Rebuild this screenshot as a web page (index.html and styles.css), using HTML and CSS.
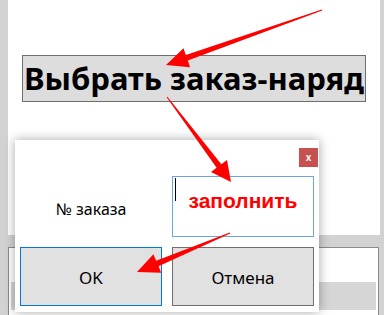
FILE: index.html
```html
<!DOCTYPE html>
<html lang="ru">
<head>
    <meta charset="UTF-8">
    <title>Выбрать заказ-наряд</title>
    <link rel="stylesheet" href="styles.css">
</head>
<body>
    <!-- Main window -->
    <div class="main-window">
        <div class="title-box">Выбрать заказ-наряд</div>
    </div>

    <!-- Lower panel -->
    <div class="lower-panel">
        <div class="lower-bar"></div>
    </div>

    <!-- Order dialog -->
    <div class="dialog">
        <button type="button" class="close-btn">x</button>
        <div class="dialog-grid">
            <div class="order-label">№ заказа</div>
            <div class="order-input">
                <span class="caret"></span>
                заполнить
            </div>
            <button type="button" class="dlg-btn ok-btn">OK</button>
            <button type="button" class="dlg-btn">Отмена</button>
        </div>
    </div>

    <!-- Red pointer arrows -->
    <svg class="arrows" width="384" height="315" viewBox="0 0 384 315">
        <polygon fill="#ff0000" points="322.2,10.5 187.8,60.5 190.1,67.2 166,65 183.5,48.3 185.8,54.9 321.8,9.5"/>
        <polygon fill="#ff0000" points="166.6,97.3 216.6,167.8 211,172 231,182 227,160 221.4,164.2 167.4,96.7"/>
        <polygon fill="#ff0000" points="230.2,233.5 158.5,266.3 161.2,272.7 137,272 153.4,254.3 156.1,260.7 229.8,232.5"/>
    </svg>
</body>
</html>
```

FILE: styles.css
```css
body {
    margin: 0;
    width: 384px;
    height: 315px;
    overflow: hidden;
    background-color: #d2d2d2; /* Desktop grey */
    font-family: "Noto Sans", "Open Sans", sans-serif;
    color: #000000;
    position: relative;
}

.main-window {
    margin: 0 4px 0 8px;
    height: 235px;
    background-color: #ffffff;
    display: flex;
    justify-content: center;
    align-items: flex-start;
    padding-top: 55px;
    box-sizing: border-box;
}

.title-box {
    background-color: #dddddd;
    border: 1px solid #6e6e6e;
    width: 344px;
    height: 47px;
    box-sizing: border-box;
    font-size: 31px;
    font-weight: bold;
    line-height: 44px;
    text-align: center;
    white-space: nowrap;
}

.lower-panel {
    margin: 12px 5px 0 8px;
    height: 80px;
    background-color: #ffffff;
    border: 1px solid #8a8a8a;
    padding: 34px 2px 0 2px;
    box-sizing: border-box;
}

.lower-bar {
    height: 28px;
    background-color: #d6d6d6;
}

/* Dialog lies over the main window */
.dialog {
    position: absolute;
    left: 15px;
    top: 140px;
    width: 304px;
    height: 172px;
    background-color: #ffffff;
    box-shadow: 0 0 10px rgba(0, 0, 0, 0.35);
    padding: 36px 5px 0 5px;
    box-sizing: border-box;
}

.close-btn {
    position: absolute;
    left: 284px;
    top: 8px;
    width: 19px;
    height: 19px;
    padding: 0;
    border: none;
    background-color: #c75050;
    color: #ffffff;
    font-family: "Liberation Sans", Arial, sans-serif;
    font-size: 10px;
    font-weight: bold;
    line-height: 17px;
}

.dialog-grid {
    display: grid;
    grid-template-columns: 142px 142px;
    grid-template-rows: 61px 59px;
    column-gap: 10px;
    row-gap: 10px;
}

.order-label {
    display: flex;
    align-items: center;
    justify-content: center;
    font-size: 16px;
    padding-top: 4px;
}

.order-input {
    position: relative;
    border: 1px solid #6aa6e3;
    box-sizing: border-box;
    font-family: "Liberation Sans", Arial, sans-serif;
    font-size: 21px;
    font-weight: bold;
    color: #ff0000;
    text-align: center;
    padding-top: 12px;
}

.caret {
    position: absolute;
    left: 2px;
    top: 1px;
    width: 1px;
    height: 23px;
    background-color: #000000;
}

.dlg-btn {
    background-color: #e1e1e1;
    border: 1px solid #707070;
    font-family: "Noto Sans", "Open Sans", sans-serif;
    font-size: 17px;
    color: #000000;
    padding: 2px 0 0 0;
}

.ok-btn {
    border-color: #0078d7;
}

.arrows {
    position: absolute;
    left: 0;
    top: 0;
}
```
